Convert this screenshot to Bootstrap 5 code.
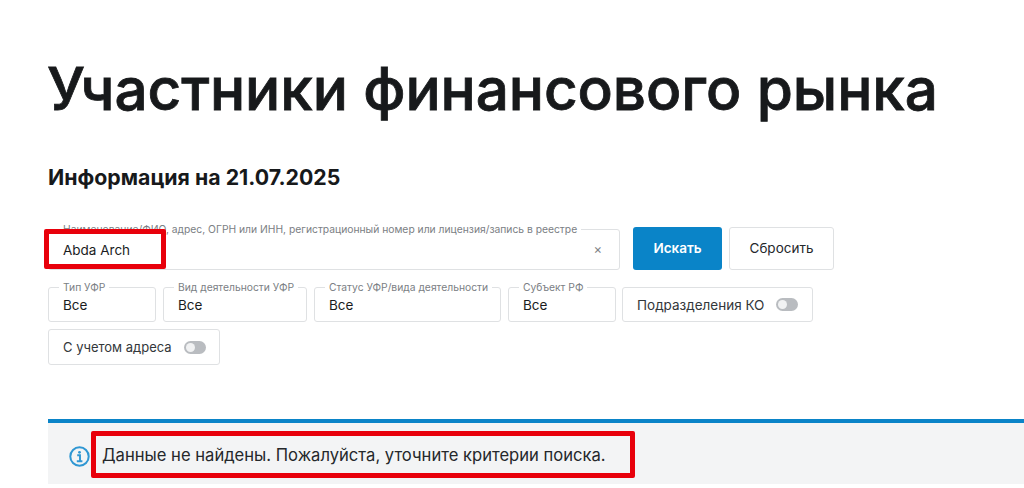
<!DOCTYPE html>
<html lang="ru">
<head>
<meta charset="utf-8">
<title>Участники финансового рынка</title>
<link href="https://cdn.jsdelivr.net/npm/bootstrap@5.3.0/dist/css/bootstrap.min.css" rel="stylesheet">
<style>
html,body{height:488px;overflow:hidden;background:#fff;}
body{font-family:Inter,"Noto Sans",sans-serif;color:#1a1c1e;}
.page-wrap{padding:54px 0 0 47px;}
.page-title{font-size:58.5px;font-weight:500;line-height:70px;margin:0;color:#17191b;letter-spacing:-.08px;white-space:nowrap;-webkit-text-stroke:.8px #17191b;}
.info-date{font-size:21.3px;font-weight:700;line-height:26px;margin:40px 0 0 1px;color:#17191b;}
.search-form{width:786px;margin:37px 0 0 1px;}
.search-line{gap:13px;}
.field-box{position:relative;border:1px solid #dfe1e3;border-radius:3px;background:#fff;font-size:13.5px;display:flex;align-items:center;padding-top:2px;}
.field-main{width:572px;height:41px;padding:2px 14px 0;margin-top:2px;}
.field-label{position:absolute;top:-7px;left:10px;padding:0 4px;background:#fff;font-size:10.3px;line-height:12px;color:#7b8084;white-space:nowrap;}
.clear-x{margin-left:auto;margin-right:3px;color:#808488;font-size:13px;line-height:1;margin-top:-3px;}
.btn-row{gap:7px;}
.btn-find{width:89px;height:43px;background:#0a84c8;border:0;border-radius:3px;color:#fff;font-size:13.5px;font-weight:600;padding:0;}
.btn-reset{width:105px;height:43px;background:#fff;border:1px solid #dfe1e3;border-radius:3px;color:#25282b;font-size:13.5px;padding:0;}
.filter-line{gap:7px;margin-top:17px;}
.field-sel{height:35px;padding:2px 14px 0;}
.w-type{width:108px;}.w-kind{width:144px;}.w-status{width:187px;}.w-subj{width:108px;margin-right:-1px;}
.toggle-box{height:35px;padding:2px 14px 0;gap:12px;border:1px solid #dfe1e3;border-radius:3px;font-size:13.5px;color:#33373a;white-space:nowrap;}
.toggle-box.addr{height:36px;font-size:13px;padding:2px 13px 0 14px;gap:12px;}
.toggle-track{width:22px;height:13px;border-radius:7px;background:#b9bcc0;position:relative;display:block;margin-top:-2px;}
.toggle-knob{position:absolute;left:2px;top:2px;width:9px;height:9px;border-radius:50%;background:#f1f2f3;}
.result-bar{position:absolute;left:48px;right:0;top:419px;height:65px;border-top:4px solid #0a84c8;background:#f3f4f5;gap:12px;padding:0 0 0 21px;font-size:16.6px;color:#25282b;}
.info-ico{width:21px;height:21px;flex:none;margin-top:5px;}
.result-text{margin-top:3px;white-space:nowrap;}
.mark-box{position:absolute;border:5px solid #e8000b;border-radius:2px;pointer-events:none;}
.mark-a{left:44px;top:229px;width:122px;height:40px;}
.mark-b{left:91px;top:431px;width:544px;height:47px;}
</style>
</head>
<body>
<main class="page-wrap">
  <h1 class="page-title">Участники финансового рынка</h1>
  <p class="info-date">Информация на 21.07.2025</p>
  <form class="search-form">
    <div class="d-flex align-items-start search-line">
      <div class="field-box field-main">
        <span class="field-label">Наименование/ФИО, адрес, ОГРН или ИНН, регистрационный номер или лицензия/запись в реестре</span>
        <span>Abda Arch</span>
        <span class="clear-x">×</span>
      </div>
      <div class="d-flex btn-row">
        <button type="button" class="btn btn-find">Искать</button>
        <button type="button" class="btn btn-reset">Сбросить</button>
      </div>
    </div>
    <div class="d-flex flex-wrap filter-line">
      <div class="field-box field-sel w-type"><span class="field-label">Тип УФР</span>Все</div>
      <div class="field-box field-sel w-kind"><span class="field-label">Вид деятельности УФР</span>Все</div>
      <div class="field-box field-sel w-status"><span class="field-label">Статус УФР/вида деятельности</span>Все</div>
      <div class="field-box field-sel w-subj"><span class="field-label">Субъект РФ</span>Все</div>
      <div class="d-flex align-items-center toggle-box">Подразделения КО<span class="toggle-track"><span class="toggle-knob"></span></span></div>
      <div class="d-flex align-items-center toggle-box addr">С учетом адреса<span class="toggle-track"><span class="toggle-knob"></span></span></div>
    </div>
  </form>
</main>
<div class="d-flex align-items-center result-bar">
  <svg class="info-ico" viewBox="0 0 21 21" fill="none" aria-hidden="true">
    <circle cx="10.5" cy="10.5" r="9.2" stroke="#2f97d3" stroke-width="2"/>
    <circle cx="10.5" cy="6.3" r="1.4" fill="#2f97d3"/>
    <path d="M8.2 9.3h2.8v5.9M7.8 15.3h5.6" stroke="#2f97d3" stroke-width="1.9"/>
  </svg>
  <span class="result-text">Данные не найдены. Пожалуйста, уточните критерии поиска.</span>
</div>
<div class="mark-box mark-a"></div>
<div class="mark-box mark-b"></div>
</body>
</html>
